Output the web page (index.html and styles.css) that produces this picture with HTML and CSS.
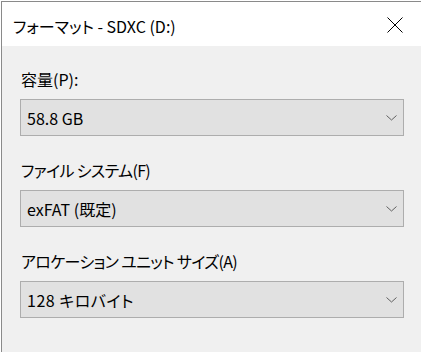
FILE: index.html
```html
<!DOCTYPE html>
<html lang="ja">
<head>
<meta charset="utf-8">
<title>フォーマット - SDXC (D:)</title>
<link rel="stylesheet" href="styles.css">
</head>
<body>
<div class="window">
  <div class="titlebar">
    <span class="title">フォーマット - SDXC (D:)</span>
    <svg class="close" width="16" height="16" viewBox="0 0 16 16"><path d="M0.5 0.5 L15.5 15.5 M15.5 0.5 L0.5 15.5" stroke="#000" stroke-width="1" fill="none"/></svg>
  </div>
  <div class="content">
    <div class="field">
      <div class="label">容量(P):</div>
      <div class="combo"><span>58.8 GB</span><svg class="chev" width="11" height="6" viewBox="0 0 11 6"><path d="M0.5 0.5 L5.5 5 L10.5 0.5" stroke="#606060" stroke-width="1" fill="none"/></svg></div>
    </div>
    <div class="field">
      <div class="label label-kana">ファイル システム(F)</div>
      <div class="combo"><span>exFAT (既定)</span><svg class="chev" width="11" height="6" viewBox="0 0 11 6"><path d="M0.5 0.5 L5.5 5 L10.5 0.5" stroke="#606060" stroke-width="1" fill="none"/></svg></div>
    </div>
    <div class="field">
      <div class="label label-kana">アロケーション ユニット サイズ(A)</div>
      <div class="combo"><span class="wide">128 キロバイト</span><svg class="chev" width="11" height="6" viewBox="0 0 11 6"><path d="M0.5 0.5 L5.5 5 L10.5 0.5" stroke="#606060" stroke-width="1" fill="none"/></svg></div>
    </div>
  </div>
</div>
</body>
</html>
```
FILE: styles.css
```css
html, body {
  margin: 0;
  padding: 0;
  background: #ffffff;
  width: 421px;
  height: 352px;
  overflow: hidden;
}
body {
  font-family: "Noto Sans CJK JP", "Noto Sans", sans-serif;
  font-size: 16px;
  font-feature-settings: "palt";
  color: #000;
  padding: 1px 0 0 1px;
  box-sizing: border-box;
}
.window {
  border-left: 1px solid #8a8a8a;
  border-top: 1px solid #8a8a8a;
  height: 351px;
  box-sizing: border-box;
  background: #f0f0f0;
  display: flex;
  flex-direction: column;
}
.titlebar {
  height: 44px;
  background: #ffffff;
  display: flex;
  align-items: center;
  justify-content: space-between;
  padding: 0 18px 0 11px;
  flex-shrink: 0;
}
.title {
  font-size: 16px;
  line-height: 20px;
  margin-top: 3px;
}
.close {
  display: block;
  margin-top: 2px;
}
.content {
  padding: 23px 17px 0 18px;
  display: flex;
  flex-direction: column;
  gap: 24px;
}
.field {
  display: flex;
  flex-direction: column;
  gap: 10px;
}
.label {
  line-height: 20px;
  padding-left: 1px;
}
.label-kana {
  letter-spacing: -0.65px;
}
.combo {
  height: 37px;
  box-sizing: border-box;
  border: 1px solid #adadad;
  background: #e1e1e1;
  display: flex;
  align-items: center;
  justify-content: space-between;
  padding: 0 6px 0 6px;
}
.combo span {
  line-height: 20px;
}
.combo .wide {
  letter-spacing: 0.5px;
}
.chev {
  display: block;
}
```
